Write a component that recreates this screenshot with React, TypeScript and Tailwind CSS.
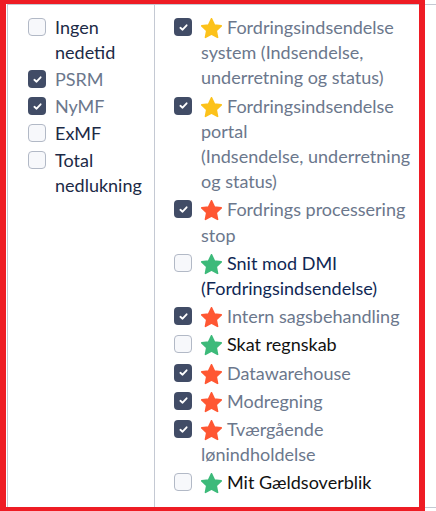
import React from "react";

type Star = "yellow" | "red" | "green";

const starColor: Record<Star, string> = {
  yellow: "#fcc21b",
  red: "#ff5733",
  green: "#3dba7a",
};

const leftItems = [
  { label: "Ingen nedetid", checked: false, color: "text-[#1c2a46]" },
  { label: "PSRM", checked: true, color: "text-[#6b778c]" },
  { label: "NyMF", checked: true, color: "text-[#6b778c]" },
  { label: "ExMF", checked: false, color: "text-[#1c2a46]" },
  { label: "Total nedlukning", checked: false, color: "text-[#1c2a46]" },
];

const rightItems: { label: React.ReactNode; checked: boolean; star: Star; color: string }[] = [
  {
    label: "Fordringsindsendelse system (Indsendelse, underretning og status)",
    checked: true,
    star: "yellow",
    color: "text-[#6b778c]",
  },
  {
    label: (
      <>
        Fordringsindsendelse portal
        <br />
        (Indsendelse, underretning og status)
      </>
    ),
    checked: true,
    star: "yellow",
    color: "text-[#6b778c]",
  },
  { label: "Fordrings processering stop", checked: true, star: "red", color: "text-[#6b778c]" },
  { label: "Snit mod DMI (Fordringsindsendelse)", checked: false, star: "green", color: "text-[#0f2754]" },
  { label: "Intern sagsbehandling", checked: true, star: "red", color: "text-[#6b778c]" },
  { label: "Skat regnskab", checked: false, star: "green", color: "text-[#111111]" },
  { label: "Datawarehouse", checked: true, star: "red", color: "text-[#6b778c]" },
  { label: "Modregning", checked: true, star: "red", color: "text-[#6b778c]" },
  { label: "Tværgående lønindholdelse", checked: true, star: "red", color: "text-[#6b778c]" },
  { label: "Mit Gældsoverblik", checked: false, star: "green", color: "text-[#111111]" },
];

function Box({ checked }: { checked: boolean }) {
  if (checked) {
    return (
      <span className="mt-[3px] flex h-[18px] w-[18px] shrink-0 items-center justify-center rounded-[4px] bg-[#414c66]">
        <svg viewBox="0 0 12 12" className="h-[11px] w-[11px]">
          <path
            d="M2.6 6.3 5 8.4 9.4 3.6"
            fill="none"
            stroke="white"
            strokeWidth="2"
            strokeLinecap="round"
            strokeLinejoin="round"
          />
        </svg>
      </span>
    );
  }
  return <span className="mt-[3px] h-[18px] w-[18px] shrink-0 rounded-[4px] border border-[#b2b9c6] bg-[#f7f8fb]" />;
}

function StarIcon({ kind }: { kind: Star }) {
  const c = starColor[kind];
  return (
    <svg viewBox="1.8 1.8 20.4 20.4" className="mr-[5px] inline-block h-[21px] w-[21px] align-[-5px]">
      <path
        d="M12 2.6l2.85 6.05 6.6.8-4.87 4.55 1.27 6.55L12 17.3l-5.85 3.25 1.27-6.55L2.55 9.45l6.6-.8z"
        fill={c}
        stroke={c}
        strokeWidth="1.6"
        strokeLinejoin="round"
      />
    </svg>
  );
}

export default function App() {
  return (
    <div className="relative h-[511px] w-[436px] overflow-hidden bg-white font-['Lato','Segoe_UI',sans-serif] text-[18px] leading-[25.2px]">
      <div className="ml-[7px] mt-[4px] flex w-[470px] border border-[#c4c9d3]">
        <div className="w-[147px] shrink-0 border-r border-[#c4c9d3] pl-5 pt-[10px] leading-[25px]">
          <div className="flex flex-col gap-[2px]">
            {leftItems.map((it) => (
              <div key={it.label} className="flex items-start gap-[9px]">
                <Box checked={it.checked} />
                <span className={`w-[90px] ${it.color}`}>{it.label}</span>
              </div>
            ))}
          </div>
        </div>
        <div className="flex-1 pb-[11px] pl-[19px] pt-[10px]">
          <div className="flex flex-col gap-[3px]">
            {rightItems.map((it, i) => (
              <div key={i} className="flex items-start gap-[9px]">
                <Box checked={it.checked} />
                <span className={`w-[215px] ${it.color}`}>
                  <StarIcon kind={it.star} />
                  {it.label}
                </span>
              </div>
            ))}
          </div>
        </div>
      </div>
      <div className="pointer-events-none absolute left-0 top-[-2px] h-[515px] w-[425px] border-[6px] border-[#ee1c24]" />
    </div>
  );
}
